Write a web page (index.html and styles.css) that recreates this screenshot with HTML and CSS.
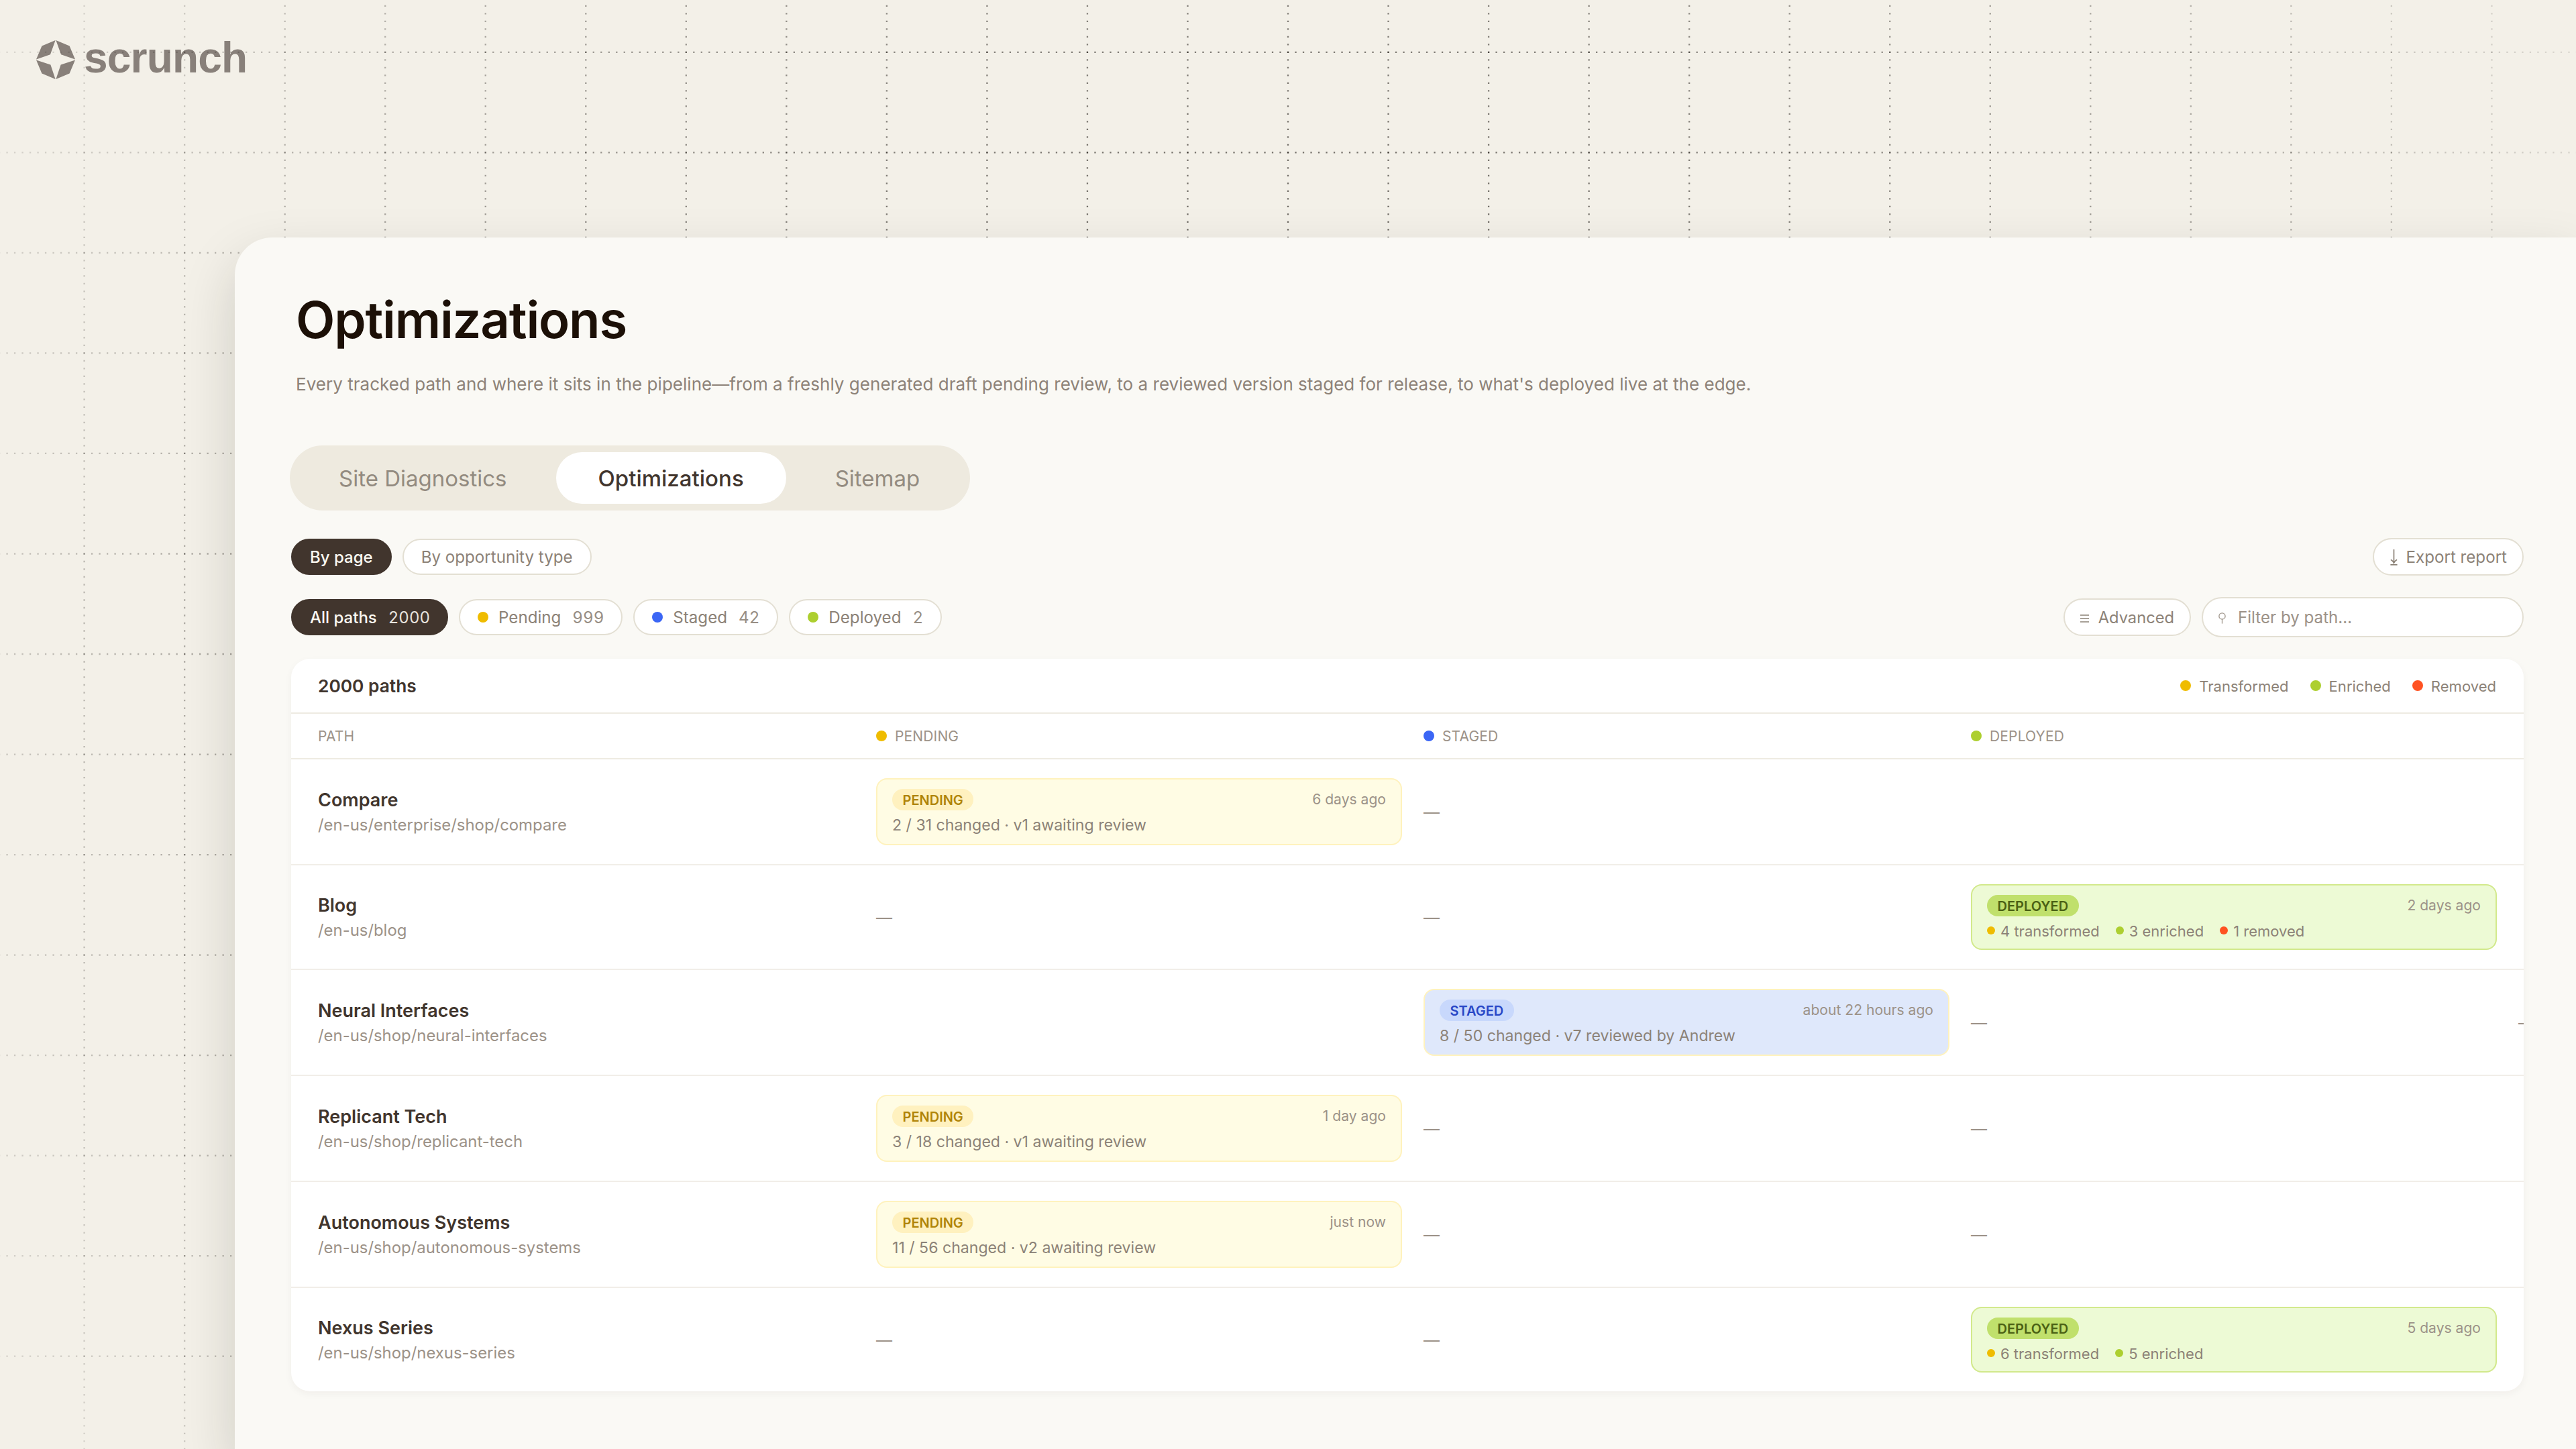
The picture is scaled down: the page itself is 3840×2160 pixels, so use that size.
FILE: index.html
```html
<!DOCTYPE html>
<html lang="en">
<head>
<meta charset="utf-8">
<title>Scrunch – Optimizations</title>
<link rel="stylesheet" href="styles.css">
</head>
<body>
<header class="brand">
  <svg class="brand-mark" viewBox="0 0 58 58" aria-hidden="true">
    <path d="M28.6 0 8.4 8.5 0 28.6 21 21.3Z M29.4 0 49.6 8.5 58 28.6 37 21.3Z M28.6 58 8.4 49.5 0 29.4 21.4 36.5Z M29.4 58 49.6 49.5 58 29.4 36.6 36.5Z"/>
  </svg>
  <span class="brand-name">scrunch</span>
</header>
<svg class="grid-lines" viewBox="0 0 3840 2160" aria-hidden="true">
  <defs>
    <radialGradient id="fade" gradientUnits="userSpaceOnUse" cx="1920" cy="1080" r="2203">
      <stop offset="0" stop-color="#1c1712" stop-opacity=".74"/>
      <stop offset=".33" stop-color="#1c1712" stop-opacity=".62"/>
      <stop offset=".49" stop-color="#1c1712" stop-opacity=".52"/>
      <stop offset=".73" stop-color="#1c1712" stop-opacity=".34"/>
      <stop offset=".88" stop-color="#1c1712" stop-opacity=".2"/>
      <stop offset="1" stop-color="#1c1712" stop-opacity=".1"/>
    </radialGradient>
  </defs>
  <path class="dots" id="rows"/>
  <path class="dots" id="cols"/>
</svg>
<main class="panel">
  <h1 class="title">Optimizations</h1>
  <p class="subtitle">Every tracked path and where it sits in the pipeline—from a freshly generated draft pending review, to a reviewed version staged for release, to what's deployed live at the edge.</p>

  <nav class="tabs">
    <a class="tab">Site Diagnostics</a>
    <a class="tab tab-active">Optimizations</a>
    <a class="tab">Sitemap</a>
  </nav>

  <div class="toolbar toolbar-view">
    <div class="chips">
      <button class="chip chip-on">By page</button>
      <button class="chip">By opportunity type</button>
    </div>
    <button class="action action-export">
      <svg class="icon-export" viewBox="0 0 11 24" aria-hidden="true"><path d="M5.5 0V20M.9 15.2C3 16.4 4.6 18 5.5 20.2 6.4 18 8 16.4 10.1 15.2M.4 22.8H10.6"/></svg>
      Export report
    </button>
  </div>

  <div class="toolbar toolbar-filter">
    <div class="chips">
      <button class="chip chip-on chip-all">All paths <span class="count">2000</span></button>
      <button class="chip"><i class="dot yellow"></i>Pending <span class="count">999</span></button>
      <button class="chip"><i class="dot blue"></i>Staged <span class="count">42</span></button>
      <button class="chip"><i class="dot green"></i>Deployed <span class="count">2</span></button>
    </div>
    <div class="filters">
      <button class="action action-advanced">
        <svg class="icon-lines" viewBox="0 0 13 12" aria-hidden="true"><path d="M0 1H13M0 6H13M0 11H13"/></svg>
        Advanced
      </button>
      <div class="search">
        <svg class="icon-search" viewBox="0 0 11 17" aria-hidden="true"><circle cx="5.5" cy="5.4" r="4.6"/><path d="M5.5 10V16.6"/></svg>
        Filter by path…
      </div>
    </div>
  </div>

  <section class="table">
    <div class="table-top">
      <span class="table-title">2000 paths</span>
      <div class="legend">
        <span class="legend-item"><i class="dot yellow"></i>Transformed</span>
        <span class="legend-item"><i class="dot green"></i>Enriched</span>
        <span class="legend-item"><i class="dot red"></i>Removed</span>
      </div>
    </div>
    <div class="row head">
      <span class="col">PATH</span>
      <span class="col"><i class="dot yellow"></i>PENDING</span>
      <span class="col"><i class="dot blue"></i>STAGED</span>
      <span class="col"><i class="dot green"></i>DEPLOYED</span>
    </div>

    <div class="row">
      <div class="path"><b class="name">Compare</b><span class="url">/en-us/enterprise/shop/compare</span></div>
      <div class="card pending">
        <div class="card-top"><span class="badge">PENDING</span><span class="time">6 days ago</span></div>
        <div class="note">2 / 31 changed · v1 awaiting review</div>
      </div>
      <span class="none">—</span>
      <span></span>
    </div>

    <div class="row">
      <div class="path"><b class="name">Blog</b><span class="url">/en-us/blog</span></div>
      <span class="none">—</span>
      <span class="none">—</span>
      <div class="card deployed">
        <div class="card-top"><span class="badge">DEPLOYED</span><span class="time">2 days ago</span></div>
        <div class="stats">
          <span class="stat"><i class="dot yellow"></i>4 transformed</span>
          <span class="stat"><i class="dot green"></i>3 enriched</span>
          <span class="stat"><i class="dot red"></i>1 removed</span>
        </div>
      </div>
    </div>

    <div class="row">
      <div class="path"><b class="name">Neural Interfaces</b><span class="url">/en-us/shop/neural-interfaces</span></div>
      <span></span>
      <div class="card staged">
        <div class="card-top"><span class="badge">STAGED</span><span class="time">about 22 hours ago</span></div>
        <div class="note">8 / 50 changed · v7 reviewed by Andrew</div>
      </div>
      <span class="none">—</span>
      <span class="none">—</span>
    </div>

    <div class="row">
      <div class="path"><b class="name">Replicant Tech</b><span class="url">/en-us/shop/replicant-tech</span></div>
      <div class="card pending">
        <div class="card-top"><span class="badge">PENDING</span><span class="time">1 day ago</span></div>
        <div class="note">3 / 18 changed · v1 awaiting review</div>
      </div>
      <span class="none">—</span>
      <span class="none">—</span>
    </div>

    <div class="row">
      <div class="path"><b class="name">Autonomous Systems</b><span class="url">/en-us/shop/autonomous-systems</span></div>
      <div class="card pending">
        <div class="card-top"><span class="badge">PENDING</span><span class="time">just now</span></div>
        <div class="note">11 / 56 changed · v2 awaiting review</div>
      </div>
      <span class="none">—</span>
      <span class="none">—</span>
    </div>

    <div class="row">
      <div class="path"><b class="name">Nexus Series</b><span class="url">/en-us/shop/nexus-series</span></div>
      <span class="none">—</span>
      <span class="none">—</span>
      <div class="card deployed">
        <div class="card-top"><span class="badge">DEPLOYED</span><span class="time">5 days ago</span></div>
        <div class="stats">
          <span class="stat"><i class="dot yellow"></i>6 transformed</span>
          <span class="stat"><i class="dot green"></i>5 enriched</span>
        </div>
      </div>
    </div>
  </section>
</main>
<script src="grid.js"></script>
</body>
</html>
```
FILE: grid.js
```js
// Dotted background lines: one cell is 13 dots wide.
const cell = 149.535, dot = cell / 13, x0 = 125.6, y0 = 77.8, half = 1.15;
let rows = '', cols = '';
for (let y = y0; y < 2160; y += cell) rows += `M${x0 - 11 * dot - half} ${y}H3840`;
for (let x = x0; x < 3840; x += cell) cols += `M${x} ${y0 - 7 * dot - half}V2160`;
document.getElementById('rows').setAttribute('d', rows);
document.getElementById('cols').setAttribute('d', cols);
```
FILE: styles.css
```css
* { box-sizing: border-box; }

html, body { margin: 0; height: 100%; }

body {
  position: relative;
  overflow: hidden;
  background: #f3f0e8;
  color: #41352d;
  font-family: Inter, "Liberation Sans", sans-serif;
  display: flex;
  flex-direction: column;
}

/* Brand */
.brand {
  flex: none;
  height: 354px;
  padding: 60px 0 0 54px;
  display: flex;
  align-items: flex-start;
  gap: 13px;
  color: #88807a;
}
.brand-mark { width: 58px; height: 58px; fill: currentColor; }
.brand-name {
  font: 700 64px/58px "Liberation Sans", Arial, sans-serif;
  letter-spacing: -.8px;
  margin-top: -3px;
}

.grid-lines { position: absolute; left: 0; top: 0; width: 3840px; height: 2160px; }
.dots {
  fill: none;
  stroke: url(#fade);
  stroke-width: 2.3;
  stroke-dasharray: 2.3 9.2027;
}

/* Panel */
.panel {
  position: relative;
  flex: 1;
  margin-left: 350px;
  padding: 77px 78px 0 84px;
  border-top-left-radius: 56px;
  background: #faf9f5;
  box-shadow: 0 34px 80px rgba(32, 30, 20, .17);
}
.title {
  margin: 0 0 32px 7px;
  font-size: 76px;
  line-height: 90px;
  font-weight: 600;
  letter-spacing: -1.22px;
  color: #1c1007;
}
.subtitle {
  margin: 0 0 71px 7px;
  font-size: 26px;
  line-height: 40px;
  letter-spacing: .028px;
  color: #8d8278;
}

/* Tabs */
.tabs {
  display: flex;
  gap: 10px;
  width: max-content;
  height: 97px;
  margin-left: -2px;
  padding: 10px;
  border-radius: 49px;
  background: #eeeadf;
}
.tab {
  padding: 1px 63px 0;
  border-radius: 39px;
  font-size: 33px;
  line-height: 76px;
  color: #938b80;
}
.tab:last-child { padding-right: 64.5px; }
.tab-active { background: #fff; color: #41352d; font-weight: 500; }

/* Toolbars */
.toolbar { display: flex; justify-content: space-between; align-items: center; height: 60px; }
.toolbar-view { margin-top: 39px; }
.toolbar-filter { margin-top: 30px; }
.chips, .filters { display: flex; align-items: center; gap: 16px; }
.chip, .action, .search {
  display: flex;
  align-items: center;
  border: 2px solid #e3dfd3;
  border-radius: 30px;
  background: #fff;
  font: 400 24.15px/49px Inter, sans-serif;
  color: #8c8277;
}
.chip { height: 54px; padding: 1px 26px 0; }
.chip-on { background: #41352d; border-color: #41352d; color: #fbf8f1; font-size: 24px; font-weight: 500; }
.chip-all { padding-right: 25px; }
.count { margin-left: 17px; font-weight: 400; font-variant-numeric: tabular-nums; opacity: .9; }
.chip .dot { margin: -1px 15px 0 0; }
.action { height: 56px; padding: 1px 23px 0 24px; }
.action-advanced { padding-left: 23px; font-size: 23.7px; }
.search { width: 480px; height: 60px; padding: 1px 24px 0; color: #9c9288; }
.icon-export, .icon-lines, .icon-search { fill: none; stroke: currentColor; }
.icon-export { width: 11px; height: 24px; margin-right: 13px; stroke-width: 1.7; }
.icon-lines { width: 13px; height: 12px; margin: 3px 14px 0 0; stroke-width: 1.7; }
.icon-search { width: 11px; height: 17px; margin: 1px 18px 0 -1px; stroke-width: 1.3; }

.dot { flex: none; width: 16px; height: 16px; border-radius: 50%; }
.yellow { background: #efbc00; }
.blue { background: #3b66f5; }
.green { background: #adcf30; }
.red { background: #ff5222; }

/* Table */
.table {
  margin-top: 32px;
  border-radius: 28px;
  background: #fff;
  box-shadow: 0 4px 12px rgba(40, 34, 20, .045);
  overflow: hidden;
}
.table-top {
  display: flex;
  align-items: center;
  justify-content: space-between;
  height: 82px;
  padding: 0 41px 0 40px;
  border-bottom: 2px solid #eeebe2;
}
.table-title { font-size: 26.3px; font-weight: 600; }
.legend { display: flex; gap: 32px; }
.legend-item { display: flex; align-items: center; gap: 12px; padding-top: 2px; font-size: 22.05px; color: #8c8277; }
.legend-item .dot { margin-top: -2px; }

.row {
  display: grid;
  grid-template-columns: 800px repeat(3, 784px);
  grid-auto-columns: 784px;
  grid-auto-flow: column;
  column-gap: 32px;
  align-items: center;
  padding: 28px 40px;
  border-bottom: 2px solid #f1eee8;
}
.row:last-child { border-bottom: 0; }
.head { height: 68px; padding: 0 40px; border-color: #eeebe2; }
.col {
  display: flex;
  align-items: center;
  gap: 12px;
  font-size: 21px;
  letter-spacing: .15px;
  color: #9c9288;
}

.path { display: flex; flex-direction: column; gap: 2px; padding-top: 2px; }
.name { font-size: 27px; line-height: 36px; font-weight: 600; }
.url { font-size: 23.9px; line-height: 34px; color: #9c9288; }
.none { padding-top: 2px; font-size: 24px; line-height: 30px; color: #9c9288; }

/* Stage cards */
.card { padding: 14px 22px; border: 2px solid; border-radius: 16px; }
.card-top { display: flex; align-items: center; justify-content: space-between; }
.badge {
  padding: 2px 15.5px 0;
  border-radius: 16px;
  font-size: 20px;
  line-height: 30px;
  font-weight: 600;
}
.time { font-size: 21.1px; line-height: 30px; color: #9c9288; }
.note { margin-top: 8px; font-size: 23.1px; line-height: 28px; color: #8c8277; }
.stats { display: flex; gap: 24px; margin-top: 10px; font-size: 22px; line-height: 24px; color: #8c8277; }
.stat { display: flex; align-items: center; gap: 8px; }
.stat .dot { width: 12px; height: 12px; margin-top: -2px; }

.pending { background: #fffce4; border-color: #fff2bd; }
.pending .badge { background: #fff1bf; color: #b08408; }
.staged { background: #dfe8fb; border-color: #fff2bd; }
.staged .badge { background: #c8d8fc; color: #2746c6; }
.deployed { background: #edfad5; border-color: #d2e98c; }
.deployed .badge { background: #c0e06c; color: #4a6014; }
```
